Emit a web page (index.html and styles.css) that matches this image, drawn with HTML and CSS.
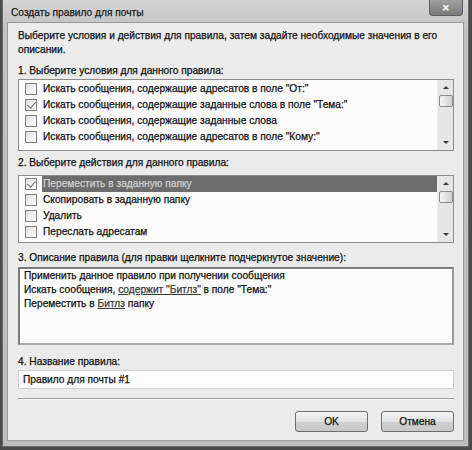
FILE: index.html
```html
<!DOCTYPE html>
<html lang="ru">
<head>
  <meta charset="UTF-8">
  <title>Создать правило для почты</title>
  <link rel="stylesheet" href="styles.css">
</head>
<body>
  <div class="window">
    <!-- заголовок окна -->
    <div class="titlebar">
      <span class="title">Создать правило для почты</span>
      <button class="close-btn">&#x2715;</button>
    </div>

    <div class="client">
      <p class="intro">Выберите условия и действия для правила, затем задайте необходимые значения в его описании.</p>

      <div class="section-label sec1">1. Выберите условия для данного правила:</div>
      <div class="listbox list1">
        <ul class="rows">
          <li class="row"><span class="check"></span><span class="row-text">Искать сообщения, содержащие адресатов в поле "От:"</span></li>
          <li class="row"><span class="check checked"></span><span class="row-text">Искать сообщения, содержащие заданные слова в поле "Тема:"</span></li>
          <li class="row"><span class="check"></span><span class="row-text">Искать сообщения, содержащие заданные слова</span></li>
          <li class="row"><span class="check"></span><span class="row-text">Искать сообщения, содержащие адресатов в поле "Кому:"</span></li>
        </ul>
        <div class="scrollbar">
          <span class="arrow up"></span>
          <span class="thumb"></span>
          <span class="arrow down"></span>
        </div>
      </div>

      <div class="section-label sec2">2. Выберите действия для данного правила:</div>
      <div class="listbox list2">
        <ul class="rows">
          <li class="row selected"><span class="check checked"></span><span class="row-text">Переместить в заданную папку</span></li>
          <li class="row"><span class="check"></span><span class="row-text">Скопировать в заданную папку</span></li>
          <li class="row"><span class="check"></span><span class="row-text">Удалить</span></li>
          <li class="row"><span class="check"></span><span class="row-text">Переслать адресатам</span></li>
        </ul>
        <div class="scrollbar">
          <span class="arrow up"></span>
          <span class="thumb"></span>
          <span class="arrow down"></span>
        </div>
      </div>

      <div class="section-label sec3">3. Описание правила (для правки щелкните подчеркнутое значение):</div>
      <div class="description">
        <div>Применить данное правило при получении сообщения</div>
        <div>Искать сообщения, <a class="value">содержит "Битлз"</a> в поле "Тема:"</div>
        <div>Переместить в <a class="value">Битлз</a> папку</div>
      </div>

      <div class="section-label sec4">4. Название правила:</div>
      <input class="name-input" type="text" value="Правило для почты #1">

      <div class="separator"></div>

      <div class="buttons">
        <button class="btn">OK</button>
        <button class="btn">Отмена</button>
      </div>
    </div>
  </div>
</body>
</html>
```

FILE: styles.css
```css
* {
  box-sizing: border-box;
}

body {
  margin: 0;
  background-color: #4a4a4a;
  font-family: "Liberation Sans", Arial, sans-serif;
  font-size: 10.2px;
  -webkit-text-stroke: 0.25px;
  color: #111111;
}

.window {
  width: 467px;
  height: 447px;
  margin-left: 2px;
  background: linear-gradient(#d4d4d4, #c2c2c2 30px, #bdbdbd);
  border: 1px solid #6a6a6a;
  border-top: none;
  padding: 0 4px 5px 4px;
  display: flex;
  flex-direction: column;
}

/* заголовок */
.titlebar {
  height: 22px;
  display: flex;
  align-items: flex-start;
  justify-content: space-between;
}

.title {
  line-height: 14px;
  margin-top: 6px;
  margin-left: 4px;
  color: #1a1a1a;
}

.close-btn {
  width: 34px;
  height: 16px;
  margin-right: 1px;
  border: 1px solid #5c5c5c;
  border-top: none;
  border-radius: 0 0 4px 4px;
  background: linear-gradient(#a0a0a0, #7a7a7a);
  color: #eeeeee;
  font-size: 9px;
  font-weight: bold;
  line-height: 14px;
  padding: 0;
}

.client {
  flex: 1;
  background-color: #ebebeb;
  border: 1px solid #9a9a9a;
  padding: 6px 9px 0 10px;
  display: flex;
  flex-direction: column;
}

.intro {
  margin: 0;
  line-height: 14px;
  padding-right: 4px;
}

.section-label {
  line-height: 14px;
}

.sec1 { margin-top: 7px; }
.sec2 { margin-top: 5px; }
.sec3 { margin-top: 8px; }
.sec4 { margin-top: 10px; }

/* списки с флажками */
.listbox {
  display: flex;
  background-color: #fcfcfc;
  border: 1px solid #8c8c8c;
}

.list1 {
  height: 72px;
  margin-top: 1px;
}

.list2 {
  height: 68px;
  margin-top: 5px;
}

.rows {
  flex: 1;
  list-style: none;
  margin: 0;
  padding: 1px 0 0 0;
}

.list2 .rows {
  padding-top: 0;
}

.row {
  height: 16px;
  display: flex;
  align-items: center;
  padding-left: 6px;
}

.check {
  width: 12px;
  height: 12px;
  border: 1px solid #7e7e7e;
  background: linear-gradient(135deg, #dedede, #ffffff);
  margin-right: 5px;
  position: relative;
}

.check.checked::after {
  content: "";
  position: absolute;
  left: 3px;
  top: 0px;
  width: 4px;
  height: 7px;
  border: solid #6a6a6a;
  border-width: 0 1.5px 1.5px 0;
  transform: rotate(40deg);
}

.row-text {
  flex: 1;
  line-height: 16px;
  padding-left: 1px;
}

.row.selected .row-text {
  background-color: #6c6c6c;
  color: #cfcfcf;
}

.scrollbar {
  width: 16px;
  background-color: #e6e6e6;
  border-left: 1px solid #efefef;
  display: flex;
  flex-direction: column;
  align-items: center;
  padding-top: 6px;
}

.arrow {
  width: 0;
  height: 0;
  border-left: 3px solid transparent;
  border-right: 3px solid transparent;
}

.arrow.up {
  border-bottom: 3px solid #3c3c3c;
}

.arrow.down {
  border-top: 3px solid #3c3c3c;
  margin-top: auto;
  margin-bottom: 6px;
}

.thumb {
  width: 14px;
  height: 12px;
  margin-top: 6px;
  border: 1px solid #8a8a8a;
  border-radius: 2px;
  background: linear-gradient(90deg, #f4f4f4, #cfcfcf);
}

/* описание правила */
.description {
  height: 78px;
  margin-top: 2px;
  background-color: #fcfcfc;
  border: 2px solid #7a7a7a;
  border-right-color: #9a9a9a;
  border-bottom-color: #a8a8a8;
  padding: 0 4px;
  line-height: 14px;
}

.value {
  color: #3a3a3a;
  text-decoration: underline;
}

.name-input {
  height: 19px;
  margin-top: 1px;
  border: 1px solid #d0d0d0;
  background-color: #fdfdfd;
  font: inherit;
  color: #111111;
  padding: 0 4px;
}

.separator {
  height: 2px;
  margin-top: 9px;
  border-top: 1px solid #9c9c9c;
  border-bottom: 1px solid #f8f8f8;
}

.buttons {
  display: flex;
  justify-content: flex-end;
  gap: 13px;
  margin-top: 11px;
}

.btn {
  width: 73px;
  height: 21px;
  border: 1px solid #6e6e6e;
  border-radius: 3px;
  background: linear-gradient(#f4f4f4, #e2e2e2 50%, #d0d0d0 51%, #c8c8c8);
  font: inherit;
  color: #111111;
  padding: 0;
}
```
